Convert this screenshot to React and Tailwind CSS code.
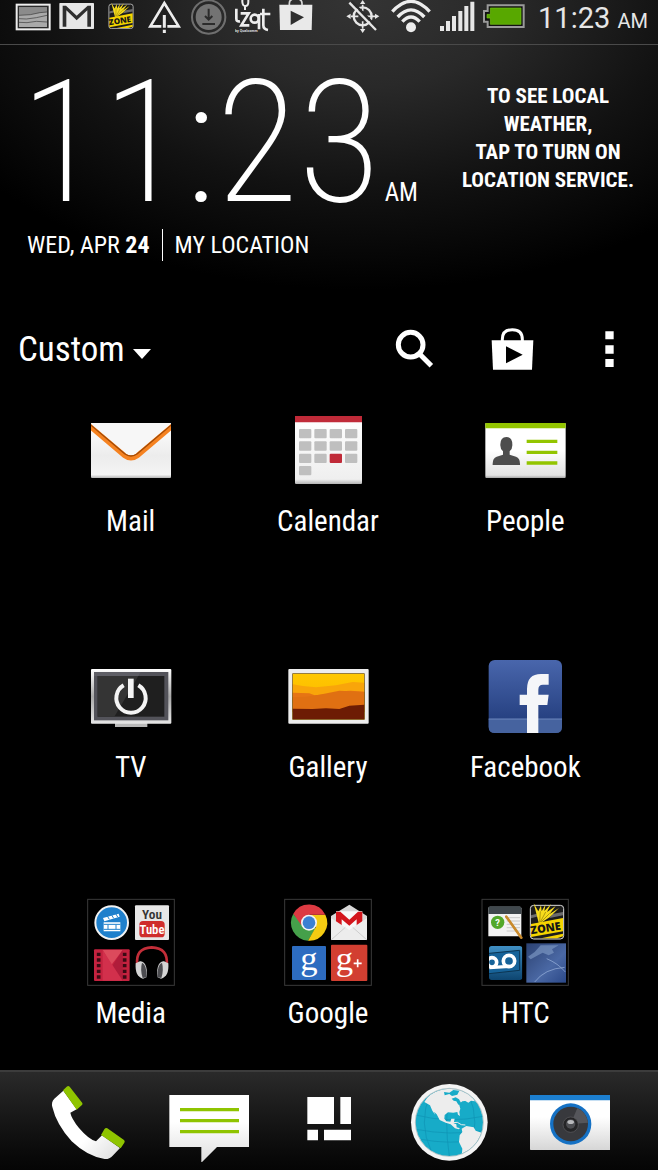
const statusLeft = [
  { name: "Picture saved", icon: PictureGlyph },
  { name: "New mail", icon: GmailGlyph },
  { name: "Zone", icon: ZoneGlyph },
  { name: "Warning", icon: WarningGlyph },
  { name: "Download", icon: DownloadGlyph },
  { name: "Izat", icon: IzatGlyph },
  { name: "Play Store", icon: StoreGlyph },
];

const statusRight = [
  { name: "GPS off", icon: GpsOffGlyph },
  { name: "Wi-Fi", icon: WifiGlyph },
  { name: "Signal", icon: SignalGlyph },
  { name: "Battery", icon: BatteryGlyph },
];

const apps = [
  { label: "Mail", icon: MailIcon },
  { label: "Calendar", icon: CalendarIcon },
  { label: "People", icon: PeopleIcon },
  { label: "TV", icon: TvIcon },
  { label: "Gallery", icon: GalleryIcon },
  { label: "Facebook", icon: FacebookIcon },
  { label: "Media", icon: MediaFolder },
  { label: "Google", icon: GoogleFolder },
  { label: "HTC", icon: HtcFolder },
];

const dock = [
  { label: "Phone", icon: PhoneIcon },
  { label: "Messages", icon: MessagesIcon },
  { label: "All apps", icon: AllAppsIcon },
  { label: "Internet", icon: GlobeIcon },
  { label: "Camera", icon: CameraIcon },
];

/* ---------- status bar glyphs ---------- */

function PictureGlyph() {
  return (
    <svg viewBox="45 0 108 132" className="h-11 w-9">
      <rect x="50" y="14" width="99" height="74" fill="#2b2b2b" stroke="#ededed" strokeWidth="6" />
      <rect x="57" y="22" width="84" height="59" fill="#a9a9a9" />
      <path d="M57 22h84v14l-22 3-30 5-32 2z" fill="#8b8b8b" />
      <path d="M57 46l34-2 28-6 22-2M57 56l22 1 30-4 32-7M57 67l24 1 28-4 32 2" fill="none" stroke="#3a3a3a" strokeWidth="2" />
    </svg>
  );
}

function GmailGlyph() {
  return (
    <svg viewBox="177 0 108 132" className="h-11 w-9">
      <rect x="178" y="9" width="104" height="78" rx="2" fill="#e6e6e6" />
      <path d="M188 80V17h10l32 30 33-30h10v63h-11V31l-32 30-31-30v49z" fill="#2e2e2e" />
    </svg>
  );
}

// Shared by the status bar and the HTC folder
function ZoneArt({ x, y, size }) {
  return (
    <svg x={x} y={y} width={size} height={size} viewBox="0 0 104 110">
      <rect x="2" y="6" width="100" height="101" rx="10" fill="#1c1c1c" stroke="#d9d9d9" strokeWidth="3" />
      <path d="M4 36l26-7v9L4 45zM68 32l32-6v10l-40 8z" fill="#8f8f8f" opacity=".7" />
      <path d="M28 62L12 0l14 24L34 6l2 18L48 3l-4 20L64 2 52 26 78 8 60 32 88 14 60 42z" fill="#f6dc1c" />
      <path d="M30 58L32 24M32 56l16-30M34 56l26-26" stroke="#8a7a05" strokeWidth="2" />
      <path d="M4 62l96-18v40L4 101z" fill="#f5d400" />
      <path d="M34 105l66-14v8l-18 6z" fill="#f5d400" />
      <text x="4" y="93" transform="rotate(-9 4 93)" className="font-['Open_Sans',sans-serif] text-[33px] font-extrabold" fill="#161616">ZONE</text>
    </svg>
  );
}

function ZoneGlyph() {
  return (
    <svg viewBox="309 0 108 132" className="h-11 w-9">
      <ZoneArt x={323} y={8} size={80} />
    </svg>
  );
}

function WarningGlyph() {
  return (
    <svg viewBox="441 0 108 132" className="h-11 w-9">
      <path d="M484 79h-33l42-70 43 70h-34" fill="none" stroke="#ededed" strokeWidth="8" />
      <path d="M493 45v38M493 89v10" stroke="#ededed" strokeWidth="9" />
    </svg>
  );
}

function DownloadGlyph() {
  return (
    <svg viewBox="573 0 108 132" className="h-11 w-9">
      <circle cx="626" cy="51" r="50" fill="none" stroke="#6f6f6f" strokeWidth="6" />
      <circle cx="626" cy="51" r="39" fill="#737373" />
      <path d="M626 26v30M615 48l11 11 11-11M607 72h38" fill="none" stroke="#2b2b2b" strokeWidth="6" />
    </svg>
  );
}

function IzatGlyph() {
  return (
    <svg viewBox="705 0 108 132" className="h-11 w-9">
      <g fill="none" stroke="#ededed" strokeWidth="8">
        <path d="M709 26v30q0 10 11 8M722 40h24l-22 36h24" />
        <circle cx="764" cy="56" r="12" />
        <path d="M777 42v46M790 26v50q0 12 14 14M780 42h31" />
        <path d="M735 30v-12M727 0v6q1 12 9 12 9 0 9-12V0" strokeWidth="6" />
      </g>
      <text x="705" y="97" className="font-['Roboto',sans-serif] text-[11px] font-bold" fill="#dcdcdc">by Qualcomm</text>
    </svg>
  );
}

function StoreGlyph() {
  return (
    <svg viewBox="837 0 108 132" className="h-11 w-9">
      <path d="M868 16V10q0-14 19-14t19 14v6" fill="none" stroke="#d8d8d8" strokeWidth="5" />
      <path d="M838 14h99l-2 76h-95z" fill="#e9e9e9" />
      <path d="M872 32l40 20-40 23z" fill="#2e2e2e" />
    </svg>
  );
}

function GpsOffGlyph() {
  return (
    <svg viewBox="37 0 126 132" className="h-11 w-[42px]">
      <circle cx="99" cy="49" r="27" fill="none" stroke="#e6e6e6" strokeWidth="7" />
      <path d="M99 14v20M99 64v22M64 49h22M112 49h24" stroke="#e6e6e6" strokeWidth="5" />
      <path d="M99 0l8 12H91zM99 99l8-12H91zM50 49l13-8v16zM149 49l-13-8v16z" fill="#e6e6e6" />
      <path d="M66 4l80 82" stroke="#2c2c2c" strokeWidth="7" />
      <path d="M59 8l80 82" stroke="#e6e6e6" strokeWidth="7" />
    </svg>
  );
}

function WifiGlyph() {
  return (
    <svg viewBox="178 0 126 132" className="h-11 w-[42px]">
      <circle cx="244" cy="82" r="15" fill="#ededed" />
      <path d="M188 35q56-62 112 0M204 51q40-43 80 0M218 65q26-28 52 0" fill="none" stroke="#ededed" strokeWidth="10" />
    </svg>
  );
}

function SignalGlyph() {
  return (
    <svg viewBox="319 0 126 132" className="h-11 w-[42px]">
      <path d="M331 78h12v15h-12zM349 63h12v30h-12zM367 48h12v45h-12zM386 33h12v60h-12zM404 18h12v75h-12zM422 5h12v88h-12z" fill="#e6e6e6" />
    </svg>
  );
}

function BatteryGlyph() {
  return (
    <svg viewBox="460 0 126 132" className="h-11 w-[42px]">
      <path d="M474 16h108v65H474V65h-11V33h11z" fill="#111" stroke="#9a9a9a" strokeWidth="6" />
      <path d="M482 24h92v49h-92V54h-10V43h10z" fill="#58a800" stroke="#74c414" strokeWidth="2" />
    </svg>
  );
}

/* ---------- toolbar icons ---------- */

function SearchIcon() {
  return (
    <svg viewBox="42 54 132 132" className="size-11">
      <circle cx="92" cy="104" r="37" fill="none" stroke="#fff" strokeWidth="15" />
      <path d="M118 131l36 36" stroke="#fff" strokeWidth="15" />
    </svg>
  );
}

function ShopIcon() {
  return (
    <svg viewBox="333 54 132 132" className="size-11">
      <path d="M367 94v-6q0-29 30-29t30 29v6" fill="none" stroke="#fff" strokeWidth="9" />
      <path d="M335 91h125l-4 88H339z" fill="#fff" />
      <path d="M378 109l50 25-50 26z" fill="#000" />
    </svg>
  );
}

function MoreIcon() {
  return (
    <svg viewBox="624 54 132 132" className="size-11">
      <path d="M676 64h25v24h-25zM676 106h25v25h-25zM676 147h25v24h-25z" fill="#fff" />
    </svg>
  );
}

/* ---------- home screen icons ---------- */

function MailIcon() {
  return (
    <svg viewBox="51 18 264 264" className="size-22">
      <defs>
        <linearGradient id="mail-body" x1="0" y1="0" x2="0" y2="1">
          <stop offset="0" stopColor="#fff" />
          <stop offset=".6" stopColor="#ececec" />
          <stop offset=".94" stopColor="#f4f4f4" />
          <stop offset="1" stopColor="#b5b5b5" />
        </linearGradient>
        <clipPath id="mail-edge">
          <rect x="63" y="69" width="240" height="165" rx="3" />
        </clipPath>
      </defs>
      <g clipPath="url(#mail-edge)">
        <path d="M63 69h240v165H63z" fill="url(#mail-body)" />
        <path d="M63 69h240v7L204 165q-21 14-42 0L63 76z" fill="#f7f7f7" />
        <path d="M55 75l109 92q19 14 38 0l109-92" fill="none" stroke="#f58220" strokeWidth="15" />
        <path d="M55 69l109 92q19 14 38 0l109-92" fill="none" stroke="#a34a05" strokeWidth="4" />
      </g>
    </svg>
  );
}

function CalendarIcon() {
  const days = Array.from({ length: 13 }, (_, i) => i);
  return (
    <svg viewBox="642 18 264 264" className="size-22">
      <defs>
        <linearGradient id="cal-body" x1="0" y1="0" x2="0" y2="1">
          <stop offset="0" stopColor="#fff" />
          <stop offset=".93" stopColor="#efefef" />
          <stop offset="1" stopColor="#b4b4b4" />
        </linearGradient>
      </defs>
      <rect x="675" y="48" width="201" height="204" rx="3" fill="url(#cal-body)" />
      <path d="M675 48h201v19H675z" fill="#c02a38" />
      {days.map((d) => (
        <rect
          key={d}
          x={687 + (d % 4) * 46}
          y={87 + Math.floor(d / 4) * 37}
          width="37"
          height="28"
          rx="3"
          fill={d === 10 ? "#c02a38" : "#bfbfbf"}
        />
      ))}
    </svg>
  );
}

function PeopleIcon() {
  return (
    <svg viewBox="64 18 264 264" className="size-22">
      <defs>
        <linearGradient id="card-body" x1="0" y1="0" x2="0" y2="1">
          <stop offset="0" stopColor="#fff" />
          <stop offset=".5" stopColor="#fff" />
          <stop offset=".95" stopColor="#e2e2e2" />
          <stop offset="1" stopColor="#a5a5a5" />
        </linearGradient>
      </defs>
      <rect x="77" y="69" width="241" height="165" rx="3" fill="url(#card-body)" />
      <path d="M77 69h241v16H77z" fill="#93c500" />
      <path d="M99 195q-1-21 12-25l19-6v-10q-9-8-8-21 0-21 18-22 18 1 18 22 1 13-8 21v10l19 6q13 4 12 25z" fill="#4d4d4d" />
      <path d="M201 124h92M201 157h92M201 189h92" stroke="#93c500" strokeWidth="10" />
    </svg>
  );
}

function TvIcon() {
  return (
    <svg viewBox="51 6 264 264" className="size-22">
      <defs>
        <linearGradient id="tv-frame" x1="0" y1="0" x2="0" y2="1">
          <stop offset="0" stopColor="#fff" />
          <stop offset=".5" stopColor="#a8a8a8" />
          <stop offset="1" stopColor="#e6e6e6" />
        </linearGradient>
      </defs>
      <path d="M135 218h97v13h-97z" fill="#b9b9b9" />
      <rect x="63" y="57" width="241" height="164" rx="3" fill="url(#tv-frame)" />
      <rect x="72" y="66" width="223" height="145" fill="#53535a" />
      <rect x="83" y="78" width="200" height="122" fill="#1f1f1f" />
      <path d="M83 78h122l-72 122H83z" fill="#343434" />
      <path d="M72 66h140l-7 12H72z" fill="#5f5f66" />
      <path d="M161 106a44 44 0 1 0 44 0" fill="none" stroke="#f4f4f4" strokeWidth="12" />
      <path d="M174 86h17v58h-17z" fill="#f4f4f4" />
    </svg>
  );
}

function GalleryIcon() {
  return (
    <svg viewBox="642 6 264 264" className="size-22">
      <defs>
        <linearGradient id="dusk" x1="0" y1="0" x2="0" y2="1">
          <stop offset="0" stopColor="#ffc800" />
          <stop offset="1" stopColor="#fbb100" />
        </linearGradient>
      </defs>
      <rect x="655" y="57" width="241" height="164" rx="3" fill="#ededed" />
      <rect x="668" y="71" width="215" height="137" fill="url(#dusk)" />
      <path d="M668 103l30 5 40 4 60-6 50-10 35 2v60H668z" fill="#f9a50a" />
      <path d="M668 128l50 2 16 6 40-4 40-8 28-2 41 3v60H668z" fill="#e67414" />
      <path d="M668 142l40-2 40-6 60-12 75 4v60H668z" fill="#e07012" />
      <path d="M668 176l60 1 40-2 40 2 30-10 45-3v44H668z" fill="#6d1c04" />
      <rect x="668" y="71" width="215" height="137" fill="none" stroke="#6b4c10" strokeWidth="2" />
    </svg>
  );
}

function FacebookIcon() {
  return (
    <svg viewBox="64 756 264 264" className="size-22">
      <defs>
        <linearGradient id="fb-body" x1="0" y1="0" x2="0" y2="1">
          <stop offset="0" stopColor="#4966ac" />
          <stop offset="1" stopColor="#1e3877" />
        </linearGradient>
      </defs>
      <rect x="87" y="780" width="220" height="219" rx="18" fill="url(#fb-body)" />
      <path d="M87 957h220v24q0 18-18 18H105q-18 0-18-18z" fill="#46639f" />
      <path d="M87 957h220" stroke="#6d87bd" strokeWidth="3" />
      <path d="M202 999v-84h-22v-31h22v-17q0-45 42-45h23v32h-17q-14 0-14 15v15h31l-4 31h-27v84z" fill="#f5f6f9" />
    </svg>
  );
}

function MediaFolder() {
  return (
    <svg viewBox="21 24 264 264" className="size-22">
      <rect x="23" y="28" width="260" height="258" fill="none" stroke="#3a3a3a" strokeWidth="3" />
      <circle cx="95" cy="98" r="49" fill="#1f80cc" stroke="#f2f2f2" strokeWidth="6" />
      <path d="M71 97h50v27H71zM69 84l47-13 3 9-46 14z" fill="#fff" />
      <path d="M71 103h50M71 118h50M82 78l6 10M95 75l6 10M107 71l6 10M84 104v14M108 104v14" stroke="#1f80cc" strokeWidth="3" />
      <rect x="165" y="46" width="102" height="104" rx="3" fill="#e7e7e7" />
      <text x="216" y="86" textAnchor="middle" className="font-['Roboto_Condensed','Liberation_Sans_Narrow',sans-serif] text-[40px] font-semibold" fill="#333">You</text>
      <rect x="178" y="93" width="76" height="49" rx="11" fill="#cf2d2c" />
      <text x="216" y="132" textAnchor="middle" className="font-['Roboto_Condensed','Liberation_Sans_Narrow',sans-serif] text-[38px] font-semibold" fill="#fff">Tube</text>
      <rect x="42" y="178" width="107" height="95" rx="3" fill="#c4223f" />
      <path d="M68 180h60l-34 45z" fill="#dc4a5c" />
      <path d="M68 272l60-92v92z" fill="#b01c3a" />
      <path d="M68 180l60 92H68z" fill="#d2304c" />
      <path d="M56 188v80M134 188v80" stroke="#3b0a14" strokeWidth="11" strokeDasharray="10 7" />
      <path d="M172 226q-7-52 43-54 51 2 45 54" fill="none" stroke="#c32e39" strokeWidth="8" />
      <path d="M167 220q-3 40 22 46l10-4q5-22-4-40-7-10-15-8z" fill="#d4d4d4" />
      <path d="M265 220q3 40-22 46l-10-4q-5-22 4-40 7-10 15-8z" fill="#d4d4d4" />
      <path d="M188 264q-8-24-2-46 14 4 14 44zM244 264q8-24 2-46-14 4-14 44z" fill="#4c4c50" />
    </svg>
  );
}

function GoogleFolder() {
  return (
    <svg viewBox="612 24 264 264" className="size-22">
      <rect x="614" y="28" width="260" height="258" fill="none" stroke="#3a3a3a" strokeWidth="3" />
      <path d="M687 98h-24L640 71A54 54 0 0 0 684 152l22-36z" fill="#45a04a" />
      <path d="M687 74h49A54 54 0 0 1 684 152l24-42z" fill="#f4cb12" />
      <path d="M664 106L640 71A54 54 0 0 1 736 74h-49z" fill="#dd3a42" />
      <circle cx="687" cy="98" r="24" fill="#f3f3f3" />
      <circle cx="687" cy="98" r="19" fill="#3b80d2" />
      <path d="M753 78l55-34 53 34v72H753z" fill="#d7d7d7" />
      <path d="M768 64h79v44l-39 24-40-24z" fill="#f8f8f8" />
      <path d="M768 114V65h13l27 24 26-24h13v49h-17V88l-22 19-23-19v26z" fill="#d3151c" />
      <path d="M753 84l55 36 53-36v66H753z" fill="#ececec" />
      <path d="M753 150l43-38M861 150l-43-38" stroke="#bdbdbd" strokeWidth="2" />
      <rect x="636" y="168" width="102" height="102" rx="3" fill="#2d6cc0" />
      <text x="687" y="240" textAnchor="middle" className="font-['Liberation_Serif',serif] text-[104px]" fill="#fff">g</text>
      <rect x="753" y="164" width="109" height="109" rx="3" fill="#d23f31" />
      <text x="793" y="240" textAnchor="middle" className="font-['Liberation_Serif',serif] text-[104px]" fill="#fff">g</text>
      <path d="M821 220h24M833 208v24" stroke="#fff" strokeWidth="5" />
    </svg>
  );
}

function HtcFolder() {
  return (
    <svg viewBox="35 24 264 264" className="size-22">
      <defs>
        <linearGradient id="sky" x1="0" y1="0" x2="1" y2="1">
          <stop offset="0" stopColor="#2c4272" />
          <stop offset=".6" stopColor="#4a68a4" />
          <stop offset="1" stopColor="#2b4888" />
        </linearGradient>
        <linearGradient id="voice" x1="0" y1="0" x2="0" y2="1">
          <stop offset="0" stopColor="#3f8fc4" />
          <stop offset="1" stopColor="#0d4570" />
        </linearGradient>
        <clipPath id="voice-tile">
          <rect x="59" y="168" width="100" height="102" rx="8" />
        </clipPath>
      </defs>
      <rect x="38" y="28" width="259" height="258" fill="none" stroke="#3a3a3a" strokeWidth="3" />
      <path d="M57 55q0-5 5-5h89q5 0 5 5v84H57z" fill="#f2f2f2" />
      <path d="M57 72V55q0-6 6-6h87q6 0 6 6v17z" fill="#3f474c" />
      <path d="M108 83h44M112 93h40M112 103h40M112 113h40M112 123h40" stroke="#b5b5b5" strokeWidth="2" />
      <circle cx="85" cy="97" r="20" fill="#52a82a" />
      <text x="85" y="107" textAnchor="middle" className="font-['Roboto',sans-serif] text-[28px] font-bold" fill="#fff">?</text>
      <path d="M111 80l45 63" stroke="#c98a2b" strokeWidth="8" strokeLinecap="round" />
      <ZoneArt x={178} y={40} size={110} />
      <g clipPath="url(#voice-tile)">
        <path d="M59 168h100v102H59z" fill="url(#voice)" />
        <path d="M50 191l101-10v60l-101 11z" fill="#176399" stroke="#0c3552" strokeWidth="3" />
        <circle cx="68" cy="217" r="14" fill="none" stroke="#fff" strokeWidth="11" />
        <circle cx="119" cy="213" r="17" fill="none" stroke="#fff" strokeWidth="11" />
        <path d="M60 233l60-4" stroke="#fff" strokeWidth="10" />
      </g>
      <rect x="171" y="160" width="119" height="118" fill="url(#sky)" />
      <path d="M176 200l20-14 18-20h54l-20 12 6 10-16 8-18-8-14 8-22 12z" fill="#7e9ac4" opacity=".65" />
      <path d="M232 206q34 14 56 40M196 276q30-40 90-44" fill="none" stroke="#a9c0e6" strokeWidth="3" opacity=".6" />
    </svg>
  );
}

/* ---------- dock icons ---------- */

function PhoneIcon() {
  return (
    <svg viewBox="144 66 240 240" className="size-20">
      <defs>
        <linearGradient id="handset" x1="0" y1="0" x2="1" y2="1">
          <stop offset=".6" stopColor="#fff" />
          <stop offset="1" stopColor="#dcdcdc" />
        </linearGradient>
      </defs>
      <path d="M190 92l-27 24q-10 10-6 25 12 52 58 103 48 46 99 53 14 1 24-10l22-23-54-38-18 18q-22-6-51-40-23-29-26-46l19-10z" fill="url(#handset)" />
      <path d="M189 91l11-11q5-4 9 0l38 49q2 4-2 7l-15 13zM303 225l10-17q4-6 9-3l50 35q4 4 1 8l-11 17z" fill="#8fc400" />
    </svg>
  );
}

function MessagesIcon() {
  return (
    <svg viewBox="504 66 240 240" className="size-20">
      <defs>
        <linearGradient id="bubble" x1="0" y1="0" x2="0" y2="1">
          <stop offset=".4" stopColor="#fff" />
          <stop offset="1" stopColor="#dedede" />
        </linearGradient>
      </defs>
      <path d="M505 105h239v156h-96l-47 47v-47h-96z" fill="url(#bubble)" />
      <path d="M537 149h177M537 182h177M537 215h177" stroke="#8fc400" strokeWidth="10" />
    </svg>
  );
}

function AllAppsIcon() {
  return (
    <svg viewBox="864 66 240 240" className="size-20">
      <path d="M919 111h80v81h-80zM1018 111h32v81h-32zM919 209h32v32h-32zM969 209h81v32h-81z" fill="#fff" />
    </svg>
  );
}

function GlobeIcon() {
  return (
    <svg viewBox="204 66 240 240" className="size-20">
      <defs>
        <clipPath id="globe-disc">
          <circle cx="325" cy="187" r="101" />
        </clipPath>
      </defs>
      <circle cx="325" cy="187" r="115" fill="#f4f4f4" />
      <circle cx="325" cy="187" r="101" fill="#17abc8" />
      <g clipPath="url(#globe-disc)">
        <path d="M224 165q100 26 202 4M226 208q100 20 200 4M240 238q85 16 170 2M325 86q-16 100 0 202M268 100q-38 90 4 176M382 100q40 90-2 176" fill="none" stroke="#0f93b3" strokeWidth="2" />
        <path d="M250 126q14-26 48-36l22-6 44 4 24 18 4 10-12 6-16 2-10 8 4 14-3 10 2 12-6-4-2-8-12 2-16-1-10 8-1 11 6 8 12 1 3-9 10 0-3 14 8 3 1 9 10 3-4 3-11-3-13-12-15-5-18-8-9-17-8-8 4 10-9-13-7-16z" fill="#ededed" />
        <path d="M309 96l16 2 12-8 18 2-6 12-16 4-8-6-14 4zM332 116l12-4 10 6 8 14-10 2-6-10-8-2z" fill="#17abc8" />
        <path d="M372 96l22 14 8 14-12-2-8 6-10-6 8-8z" fill="#ededed" />
        <path d="M335 188l14-1 12 7 12 1" fill="none" stroke="#ededed" strokeWidth="3" />
        <path d="M362 206l14-8 22 4 6 10 22 8v20l-20 24-22 16-6 12-16-4 2-22-10-20 2-20 8-10z" fill="#ededed" />
      </g>
      <circle cx="325" cy="187" r="102" fill="none" stroke="#8aa5ab" strokeWidth="3" opacity=".6" />
    </svg>
  );
}

function CameraIcon() {
  return (
    <svg viewBox="564 66 240 240" className="size-20">
      <defs>
        <linearGradient id="cam-body" x1="0" y1="0" x2="0" y2="1">
          <stop offset=".4" stopColor="#fff" />
          <stop offset="1" stopColor="#d6d6d6" />
        </linearGradient>
      </defs>
      <rect x="564" y="105" width="241" height="165" rx="2" fill="url(#cam-body)" />
      <path d="M564 105h241v16H564z" fill="#1c7fd0" />
      <circle cx="686" cy="192" r="62" fill="#1571c4" />
      <circle cx="686" cy="192" r="52" fill="#38393d" />
      <path d="M686 192l20-48q28 14 32 44z" fill="#55565b" />
      <circle cx="686" cy="194" r="23" fill="#252527" stroke="#5d5d60" strokeWidth="2" />
      <circle cx="686" cy="192" r="14" fill="#4d4e52" />
      <ellipse cx="686" cy="186" rx="10" ry="6" fill="#b9babd" />
    </svg>
  );
}

/* ---------- screen sections ---------- */

function StatusBar() {
  return (
    <div className="flex h-[45px] items-start justify-between border-b border-[#4a4a4a] pl-[15px] pr-[10px]">
      <div className="flex gap-2">
        {statusLeft.map(({ name, icon: Icon }) => (
          <span key={name} title={name}>
            <Icon />
          </span>
        ))}
      </div>
      <div className="flex items-start gap-[5px]">
        {statusRight.map(({ name, icon: Icon }) => (
          <span key={name} title={name}>
            <Icon />
          </span>
        ))}
        <p className="pl-2 font-['Roboto',sans-serif] text-[29px] leading-9 whitespace-nowrap text-[#e6e6e6]">
          11:23 <span className="text-[20px]">AM</span>
        </p>
      </div>
    </div>
  );
}

function ClockWidget() {
  return (
    <section className="flex h-[265px] items-start justify-between pr-6 pl-5">
      <div>
        <p className="flex items-baseline gap-1 pt-7 whitespace-nowrap">
          <span className="text-[170px] leading-[140px] font-extralight">11:23</span>
          <span className="text-[25px] leading-8">AM</span>
        </p>
        <div className="mt-4 flex items-center gap-3 pl-[7px] text-[24px] leading-8 whitespace-nowrap">
          <p>
            WED, APR <b>24</b>
          </p>
          <p className="border-l border-white pl-3">MY LOCATION</p>
        </div>
      </div>
      <button className="mt-[37px] text-center text-[21px] leading-7 font-bold whitespace-nowrap">
        TO SEE LOCAL
        <br />
        WEATHER,
        <br />
        TAP TO TURN ON
        <br />
        LOCATION SERVICE.
      </button>
    </section>
  );
}

function Toolbar() {
  return (
    <div className="flex h-20 items-center justify-between pr-[26px] pl-[18px]">
      <button className="flex items-center gap-2 text-[35px]">
        Custom
        <svg viewBox="0 0 18 10" className="mt-2 h-[10px] w-[18px]">
          <path d="M0 0h18L9 10z" fill="#fff" />
        </svg>
      </button>
      <div className="flex gap-[53px]">
        <button aria-label="Search">
          <SearchIcon />
        </button>
        <button aria-label="Play Store">
          <ShopIcon />
        </button>
        <button aria-label="More options">
          <MoreIcon />
        </button>
      </div>
    </div>
  );
}

export default function App() {
  return (
    <div className="flex min-h-screen flex-col bg-black bg-[radial-gradient(ellipse_480px_290px_at_55%_0px,#343434_0%,#292929_30%,#121212_65%,#000_100%)] bg-no-repeat font-['Roboto_Condensed','Liberation_Sans_Narrow','Roboto',sans-serif] text-white">
      <StatusBar />
      <ClockWidget />
      <Toolbar />

      <main className="grid grow grid-cols-3 content-start gap-y-[115px] pt-4 pr-[34px] pb-10 pl-8">
        {apps.map(({ label, icon: Icon }) => (
          <button key={label} className="flex flex-col items-center gap-[11px]">
            <Icon />
            <span className="text-[29px] leading-8">{label}</span>
          </button>
        ))}
      </main>

      <nav className="grid h-[100px] grid-cols-5 items-center border-t-2 border-[#3c3c3c] bg-gradient-to-b from-[#2a2a2a] to-[#050505] px-7 pt-[2px]">
        {dock.map(({ label, icon: Icon }) => (
          <button key={label} aria-label={label} className="flex justify-center">
            <Icon />
          </button>
        ))}
      </nav>
    </div>
  );
}
